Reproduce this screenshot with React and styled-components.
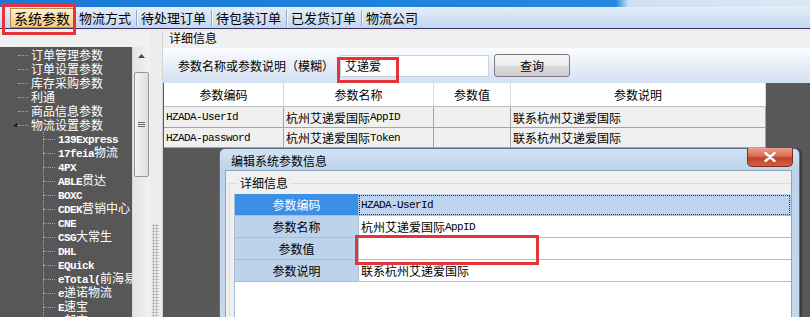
import React from 'react';
import styled, { createGlobalStyle } from 'styled-components';

const GlobalStyle = createGlobalStyle`
  html, body { margin: 0; padding: 0; background: #585858; }
  body {
    font-family: "Noto Sans CJK SC", "Liberation Sans", sans-serif;
    font-size: 12px;
    color: #000;
  }
`;

const Page = styled.div`
  position: relative;
  width: 810px;
  height: 317px;
  overflow: hidden;
  display: flex;
  flex-direction: column;
  background: #f0f0f0;
`;

const TitleStrip = styled.div`
  flex: none;
  height: 7px;
  background: linear-gradient(90deg, #1a79d6 0%, #2388e2 76%, #cfe0f2 77.6%, #dce8f5 100%);
`;

const TabBar = styled.div`
  flex: none;
  height: 21px;
  display: flex;
  align-items: stretch;
  padding-left: 10px;
  background: linear-gradient(#e6eef9, #c4d7ef);
  border-bottom: 1px solid #2c3570;
`;

const Tab = styled.div`
  display: flex;
  align-items: center;
  padding: 0 5px 0 4px;
  font-size: ${p => (p.$active ? 14 : 13)}px;
  line-height: 1;
  white-space: nowrap;
  background: ${p => (p.$active ? 'linear-gradient(#fff2d8, #f8c674)' : 'transparent')};
  box-shadow: ${p => (p.$active ? 'inset 0 0 0 1px #b48f55' : 'none')};
  margin-top: ${p => (p.$active ? 1 : 0)}px;
`;

const TabSep = styled.div`
  width: 1px;
  margin: 3px 0 2px;
  background: #8ea6c9;
  box-shadow: 1px 0 0 #f4f8fd;
`;

const PinkStrip = styled.div`
  flex: none;
  height: 2px;
  background: #f6e8e2;
`;

const Main = styled.div`
  flex: 1;
  min-height: 0;
  display: flex;
`;

const LeftPane = styled.div`
  width: 150px;
  flex: none;
  display: flex;
  flex-direction: column;
`;

const TopGap = styled.div`
  height: 16px;
  flex: none;
`;

const TreeBox = styled.div`
  flex: 1;
  display: flex;
  min-height: 0;
`;

const TreeList = styled.div`
  flex: 1;
  overflow: hidden;
  background: #575757;
  padding-top: 1px;
`;

const TreeRow = styled.div`
  height: 14px;
  display: flex;
  align-items: center;
  white-space: nowrap;
  color: #fff;
  font-size: 12px;
  line-height: 14px;
  padding-left: ${p => (p.$level === 2 ? 43 : 13)}px;
  background-image: ${p =>
    p.$level === 2 ? 'linear-gradient(#a5a5a5 50%, transparent 0)' : 'none'};
  background-size: 1px 2px;
  background-repeat: repeat-y;
  background-position: 43px 0;
`;

const Expander = styled.span`
  width: 5px;
  flex: none;
  display: flex;
  align-items: center;
`;

const Connector = styled.span`
  flex: none;
  width: ${p => (p.$level === 2 ? 12 : 10)}px;
  height: 0;
  border-top: 1px dotted #a5a5a5;
  margin-right: 3px;
`;

const Latin = styled.span`
  font-family: "Liberation Mono", monospace;
  font-size: 11px;
  letter-spacing: -0.6px;
  font-weight: ${p => (p.$bold ? 700 : 400)};
`;

const Scrollbar = styled.div`
  width: 17px;
  flex: none;
  display: flex;
  flex-direction: column;
  background: linear-gradient(90deg, #e3e3e3, #f2f2f2);
  border-left: 1px solid #d8d8d8;
`;

const ArrowBtn = styled.div`
  height: 17px;
  display: flex;
  align-items: center;
  justify-content: center;
`;

const Thumb = styled.div`
  margin: 8px 1px 0;
  height: 103px;
  border: 1px solid #979797;
  border-radius: 2px;
  background: linear-gradient(90deg, #f4f4f4, #dedede);
  display: flex;
  align-items: center;
  justify-content: center;
`;

const Splitter = styled.div`
  width: 13px;
  flex: none;
  display: flex;
  flex-direction: column;
  padding: 193px 3px 0 2px;
  background: #ececec;
  border-right: 1px solid #d4d4d4;
  box-sizing: border-box;
`;

const Grip = styled.div`
  flex: 1;
  background-image: radial-gradient(#a8a8a8 45%, transparent 50%);
  background-size: 3px 3px;
`;

const RightPane = styled.div`
  flex: 1;
  display: flex;
  flex-direction: column;
  background: #585858;
`;

const PaneHeader = styled.div`
  height: 17px;
  flex: none;
  padding-left: 6px;
  line-height: 14px;
  font-size: 12px;
  background: #f0f0f0;
`;

const SearchBar = styled.div`
  height: 35px;
  flex: none;
  display: flex;
  align-items: center;
  padding-left: 15px;
  background: linear-gradient(#fbfcfe, #d2e0f3);
`;

const SearchLabel = styled.span`
  font-size: 12px;
  margin-right: 6px;
  white-space: nowrap;
`;

const Input = styled.div`
  width: 149px;
  height: 22px;
  box-sizing: border-box;
  border: 1px solid #c9d3df;
  background: #fff;
  padding-left: 4px;
  line-height: 20px;
  font-size: 12px;
`;

const Button = styled.div`
  margin-left: 5px;
  width: 76px;
  height: 23px;
  box-sizing: border-box;
  border: 1px solid #7c7c7c;
  border-radius: 3px;
  background: linear-gradient(#f6f6f6 0%, #ebebeb 50%, #dcdcdc 51%, #cfcfcf 100%);
  display: flex;
  align-items: center;
  justify-content: center;
  font-size: 12px;
`;

const Table = styled.div`
  flex: none;
  width: 602px;
  margin-left: 1px;
  display: grid;
  grid-template-columns: 120px 150px 77px 255px;
  grid-template-rows: 24px 21px 20px;
`;

const HeadCell = styled.div`
  background: #fff;
  border-right: 1px solid #dadada;
  border-bottom: 1px solid #bdbdbd;
  display: flex;
  align-items: center;
  justify-content: center;
  font-size: 12px;
`;

const Cell = styled.div`
  background: #f0f0f0;
  border-right: 1px solid #a4a4a4;
  border-bottom: 1px solid #a4a4a4;
  display: flex;
  align-items: center;
  padding-left: 2px;
  white-space: nowrap;
  overflow: hidden;
  font-size: 12px;
`;

const Dialog = styled.div`
  position: absolute;
  left: 219px;
  top: 148px;
  width: 581px;
  height: 180px;
  box-sizing: border-box;
  display: flex;
  flex-direction: column;
  border: 1px solid #5e6f86;
  border-radius: 6px 6px 0 0;
  background: linear-gradient(#d2e2f3, #bcd3eb 22px, #c6d9ee);
  box-shadow: 2px 0 0 #3c3c3c;
`;

const DialogTitle = styled.div`
  height: 21px;
  flex: none;
  display: flex;
  align-items: flex-start;
  padding-left: 11px;
`;

const DialogTitleText = styled.span`
  margin-top: 5px;
  font-size: 12px;
  line-height: 14px;
`;

const CloseBtn = styled.div`
  margin-left: auto;
  margin-right: 6px;
  margin-top: -1px;
  width: 46px;
  height: 19px;
  box-sizing: border-box;
  border: 1px solid #7d2d20;
  border-top: none;
  border-radius: 0 0 5px 5px;
  background: linear-gradient(#eba08e 0%, #d66c53 45%, #c1402a 55%, #d4603f 100%);
  display: flex;
  align-items: center;
  justify-content: center;
`;

const DialogBody = styled.div`
  flex: 1;
  margin: 0 7px 0 5px;
  background: #f0f0f0;
  border: 1px solid #8fa3bd;
  border-bottom: none;
  padding: 5px 0 0 3px;
  display: flex;
  flex-direction: column;
`;

const Group = styled.fieldset`
  flex: 1;
  margin: 0;
  padding: 4px 0 0 4px;
  border: 1px solid #d5dde6;
  border-right: none;
  border-bottom: none;
  min-width: 0;
`;

const Legend = styled.legend`
  margin-left: 4px;
  padding: 0 2px;
  font-size: 12px;
  line-height: 14px;
`;

const PropGrid = styled.div`
  display: grid;
  grid-template-columns: 123px 1fr;
  grid-auto-rows: 22px;
  background: #fff;
  height: 100%;
  align-content: start;
  border-left: 1px solid #a8bbd3;
`;

const PropLabel = styled.div`
  background: ${p => (p.$selected ? '#3b8fe5' : '#bdd3ec')};
  color: ${p => (p.$selected ? '#fff' : '#000')};
  border-bottom: 1px solid #a9bfd9;
  display: flex;
  align-items: center;
  justify-content: center;
  font-size: 12px;
`;

const PropValue = styled.div`
  background: ${p => (p.$selected ? '#bed4ee' : '#fff')};
  border-bottom: 1px solid #a9bfd9;
  border-left: 1px solid #a9bfd9;
  outline: ${p => (p.$selected ? '1px dotted #333' : 'none')};
  outline-offset: -2px;
  display: flex;
  align-items: center;
  padding-left: 2px;
  font-size: 12px;
  white-space: nowrap;
`;

const Highlight = styled.div`
  position: absolute;
  left: ${p => p.$x}px;
  top: ${p => p.$y}px;
  width: ${p => p.$w}px;
  height: ${p => p.$h}px;
  box-sizing: border-box;
  border: 3px solid #e5333a;
  pointer-events: none;
`;

const Mixed = ({ text, bold }) =>
  text
    .split(/([\x21-\x7e]+)/)
    .filter(Boolean)
    .map((s, i) =>
      /^[\x21-\x7e]+$/.test(s) ? (
        <Latin key={i} $bold={bold}>
          {s}
        </Latin>
      ) : (
        s
      )
    );

const tabs = ['系统参数', '物流方式', '待处理订单', '待包装订单', '已发货订单', '物流公司'];

const tree = [
  { level: 1, text: '订单管理参数' },
  { level: 1, text: '订单设置参数' },
  { level: 1, text: '库存采购参数' },
  { level: 1, text: '利通' },
  { level: 1, text: '商品信息参数' },
  { level: 1, text: '物流设置参数', open: true },
  { level: 2, text: '139Express' },
  { level: 2, text: '17feia物流' },
  { level: 2, text: '4PX' },
  { level: 2, text: 'ABLE贯达' },
  { level: 2, text: 'BOXC' },
  { level: 2, text: 'CDEK营销中心' },
  { level: 2, text: 'CNE' },
  { level: 2, text: 'CSG大常生' },
  { level: 2, text: 'DHL' },
  { level: 2, text: 'EQuick' },
  { level: 2, text: 'eTotal(前海易递)' },
  { level: 2, text: 'e递诺物流' },
  { level: 2, text: 'E速宝' },
  { level: 2, text: 'E邮宝' },
];

const columns = ['参数编码', '参数名称', '参数值', '参数说明'];

const rows = [
  ['HZADA-UserId', '杭州艾递爱国际AppID', '', '联系杭州艾递爱国际'],
  ['HZADA-password', '杭州艾递爱国际Token', '', '联系杭州艾递爱国际'],
];

const props = [
  { label: '参数编码', value: 'HZADA-UserId', selected: true },
  { label: '参数名称', value: '杭州艾递爱国际AppID' },
  { label: '参数值', value: '' },
  { label: '参数说明', value: '联系杭州艾递爱国际' },
];

export default function App() {
  return (
    <Page>
      <GlobalStyle />
      <TitleStrip />
      <TabBar>
        {tabs.map((t, i) => (
          <React.Fragment key={t}>
            {i > 1 && <TabSep />}
            <Tab $active={i === 0}>{t}</Tab>
          </React.Fragment>
        ))}
      </TabBar>
      <PinkStrip />
      <Main>
        <LeftPane>
          <TopGap />
          <TreeBox>
            <TreeList>
              {tree.map(item => (
                <TreeRow key={item.text} $level={item.level}>
                  {item.level === 1 && (
                    <Expander>
                      {item.open && (
                        <svg width="6" height="6" viewBox="0 0 6 6">
                          <polygon points="5,0 5,5 0,5" fill="#1a1a1a" />
                        </svg>
                      )}
                    </Expander>
                  )}
                  <Connector $level={item.level} />
                  <span>
                    <Mixed text={item.text} bold />
                  </span>
                </TreeRow>
              ))}
            </TreeList>
            <Scrollbar>
              <ArrowBtn>
                <svg width="7" height="4" viewBox="0 0 7 4">
                  <polygon points="3.5,0 7,4 0,4" fill="#4a4a4a" />
                </svg>
              </ArrowBtn>
              <Thumb>
                <svg width="7" height="7" viewBox="0 0 7 7">
                  <path d="M0 1.5h7M0 3.5h7M0 5.5h7" stroke="#6a6a6a" strokeWidth="1" />
                </svg>
              </Thumb>
            </Scrollbar>
          </TreeBox>
        </LeftPane>
        <Splitter>
          <Grip />
        </Splitter>
        <RightPane>
          <PaneHeader>详细信息</PaneHeader>
          <SearchBar>
            <SearchLabel>参数名称或参数说明（模糊）</SearchLabel>
            <Input>艾递爱</Input>
            <Button>查询</Button>
          </SearchBar>
          <Table>
            {columns.map(c => (
              <HeadCell key={c}>{c}</HeadCell>
            ))}
            {rows.map(r =>
              r.map((v, j) => (
                <Cell key={r[0] + j}>
                  <Mixed text={v} />
                </Cell>
              ))
            )}
          </Table>
        </RightPane>
      </Main>

      <Dialog>
        <DialogTitle>
          <DialogTitleText>编辑系统参数信息</DialogTitleText>
          <CloseBtn>
            <svg width="12" height="10" viewBox="0 0 12 10">
              <path d="M1.5 1l9 8M10.5 1l-9 8" stroke="#fff" strokeWidth="2.4" strokeLinecap="round" />
            </svg>
          </CloseBtn>
        </DialogTitle>
        <DialogBody>
          <Group>
            <Legend>详细信息</Legend>
            <PropGrid>
              {props.map(p => (
                <React.Fragment key={p.label}>
                  <PropLabel $selected={p.selected}>{p.label}</PropLabel>
                  <PropValue $selected={p.selected}>
                    <Mixed text={p.value} />
                  </PropValue>
                </React.Fragment>
              ))}
            </PropGrid>
          </Group>
        </DialogBody>
      </Dialog>

      <Highlight $x={2} $y={4} $w={74} $h={31} />
      <Highlight $x={337} $y={57} $w={62} $h={26} />
      <Highlight $x={355} $y={235} $w={184} $h={30} />
    </Page>
  );
}
